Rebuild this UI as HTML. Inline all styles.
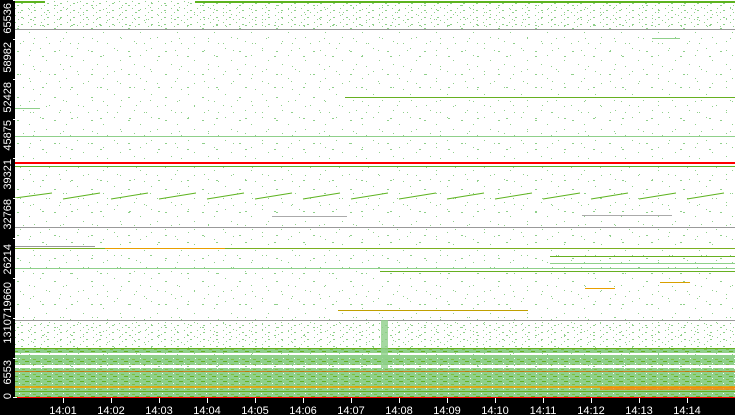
<!DOCTYPE html>
<html><head><meta charset="utf-8"><style>
html,body{margin:0;padding:0;background:#fff;width:735px;height:415px;overflow:hidden}
svg{display:block}
text{font-family:"Liberation Sans",sans-serif;font-size:11px;fill:#fff}
</style></head><body>
<svg width="735" height="415" viewBox="0 0 735 415" xmlns="http://www.w3.org/2000/svg" shape-rendering="crispEdges">
<defs>
<pattern id="n1" width="37" height="23" patternUnits="userSpaceOnUse">
<rect x="3" y="2" width="1" height="1" fill="#8fd08a"/><rect x="17" y="5" width="2" height="1" fill="#8fd08a"/>
<rect x="29" y="9" width="1" height="1" fill="#8fd08a"/><rect x="9" y="14" width="1" height="1" fill="#8fd08a"/>
<rect x="23" y="18" width="1" height="1" fill="#8fd08a"/><rect x="33" y="20" width="1" height="1" fill="#8fd08a"/>
</pattern>
<pattern id="n2" width="29" height="31" patternUnits="userSpaceOnUse">
<rect x="5" y="7" width="1" height="1" fill="#8fd08a"/><rect x="20" y="12" width="1" height="1" fill="#8fd08a"/>
<rect x="13" y="25" width="2" height="1" fill="#8fd08a"/><rect x="1" y="19" width="1" height="1" fill="#8fd08a"/>
</pattern>
<pattern id="n3" width="13" height="7" patternUnits="userSpaceOnUse">
<rect x="2" y="1" width="1" height="1" fill="#8fd08a"/><rect x="8" y="3" width="2" height="1" fill="#8fd08a"/>
<rect x="5" y="5" width="1" height="1" fill="#8fd08a"/>
</pattern>
<pattern id="d1" width="11" height="5" patternUnits="userSpaceOnUse">
<rect width="11" height="5" fill="#8fd08a"/><rect x="3" y="1" width="4" height="1" fill="#66b020"/>
<rect x="8" y="3" width="1" height="1" fill="#fff"/><rect x="0" y="4" width="3" height="1" fill="#7cc040"/>
</pattern>
</defs>
<rect x="15" y="0" width="720" height="398" fill="url(#n1)"/>
<rect x="15" y="0" width="720" height="398" fill="url(#n2)"/>
<rect x="15" y="0" width="720" height="30" fill="url(#n3)"/>
<rect x="15" y="320" width="720" height="30" fill="url(#n3)"/>
<rect x="381" y="320" width="354" height="30" fill="url(#n2)"/>
<rect x="381" y="320" width="354" height="30" fill="url(#n3)"/>
<g>
<rect x="15" y="1" width="30" height="2" fill="#5db31f"/><rect x="195" y="1" width="540" height="2" fill="#5db31f"/>
<rect x="15" y="29" width="720" height="1" fill="#999"/>
<rect x="652" y="38" width="28" height="1" fill="#8fd08a"/>
<rect x="345" y="97" width="390" height="1" fill="#66b020"/>
<rect x="15" y="108" width="25" height="1" fill="#8fd08a"/>
<rect x="15" y="136" width="720" height="1" fill="#8fd08a"/>
<rect x="15" y="162" width="720" height="2" fill="#f00"/>
<rect x="15" y="166" width="720" height="1" fill="#5db31f"/>
<g stroke="#5db31f" stroke-width="1" shape-rendering="auto">
<line x1="15" y1="198" x2="52" y2="193"/><line x1="63" y1="199" x2="100" y2="193"/>
<line x1="111" y1="199" x2="148" y2="193"/><line x1="159" y1="199" x2="196" y2="193"/>
<line x1="207" y1="199" x2="244" y2="193"/><line x1="255" y1="199" x2="292" y2="193"/>
<line x1="303" y1="199" x2="340" y2="193"/><line x1="351" y1="199" x2="388" y2="193"/>
<line x1="399" y1="199" x2="436" y2="193"/><line x1="447" y1="199" x2="484" y2="193"/>
<line x1="495" y1="199" x2="532" y2="193"/><line x1="543" y1="199" x2="580" y2="193"/>
<line x1="591" y1="199" x2="628" y2="193"/><line x1="639" y1="199" x2="676" y2="193"/>
<line x1="687" y1="199" x2="724" y2="193"/>
</g>
<rect x="272" y="216" width="75" height="1" fill="#aaa"/><rect x="582" y="215" width="90" height="1" fill="#aaa"/>
<rect x="15" y="227" width="720" height="1" fill="#999"/>
<rect x="15" y="246" width="80" height="1" fill="#999"/>
<rect x="15" y="248" width="720" height="1" fill="#7ab020"/>
<rect x="105" y="248" width="120" height="1" fill="#e8a000"/>
<rect x="550" y="256" width="185" height="1" fill="#66b020"/>
<rect x="550" y="263" width="185" height="1" fill="#8fd08a"/>
<rect x="15" y="268" width="720" height="1" fill="#8fd08a"/>
<rect x="380" y="271" width="355" height="1" fill="#66b020"/>
<rect x="585" y="288" width="30" height="1" fill="#e8a000"/><rect x="660" y="282" width="30" height="1" fill="#d8a000"/>
<rect x="338" y="310" width="190" height="1" fill="#c0a000"/>
<rect x="15" y="320" width="720" height="1" fill="#999"/>
</g>
<rect x="15" y="348" width="720" height="5" fill="url(#d1)"/>
<rect x="15" y="348" width="720" height="1" fill="#66b020"/>
<rect x="15" y="355" width="720" height="3" fill="#8fd08a"/>
<rect x="15" y="358" width="720" height="7" fill="url(#d1)"/>
<rect x="15" y="368" width="720" height="29" fill="url(#d1)"/>
<rect x="15" y="371" width="720" height="1" fill="#e06000" opacity=".7"/>
<rect x="15" y="386" width="720" height="2" fill="#f0a000" opacity=".8"/>
<rect x="15" y="391" width="720" height="1" fill="#66b020"/>
<rect x="600" y="387" width="135" height="3" fill="#ff8000" opacity=".7"/>
<rect x="381" y="320" width="7" height="48" fill="#8fd08a" opacity=".8"/>
<rect x="15" y="397" width="720" height="1" fill="#f00"/>
<rect x="0" y="0" width="15" height="415" fill="#000"/>
<rect x="0" y="398" width="735" height="17" fill="#000"/>
<g fill="#fff">
<rect x="13" y="0" width="4" height="1"/><rect x="13" y="39" width="4" height="1"/><rect x="13" y="79" width="4" height="1"/>
<rect x="13" y="119" width="4" height="1"/><rect x="13" y="158" width="4" height="1"/><rect x="13" y="198" width="4" height="1"/>
<rect x="13" y="238" width="4" height="1"/><rect x="13" y="278" width="4" height="1"/><rect x="13" y="318" width="4" height="1"/>
<rect x="13" y="358" width="4" height="1"/><rect x="13" y="397" width="4" height="1"/>
</g>
<g text-anchor="end" style="font-size:10px">
<text transform="translate(11,3) rotate(-90)">65536</text>
<text transform="translate(11,42) rotate(-90)">58982</text>
<text transform="translate(11,82) rotate(-90)">52428</text>
<text transform="translate(11,120) rotate(-90)">45875</text>
<text transform="translate(11,159) rotate(-90)">39321</text>
<text transform="translate(11,199) rotate(-90)">32768</text>
<text transform="translate(11,244) rotate(-90)">26214</text>
<text transform="translate(11,282) rotate(-90)">19660</text>
<text transform="translate(11,313) rotate(-90)">13107</text>
<text transform="translate(11,360) rotate(-90)">6553</text>
<text transform="translate(11,393) rotate(-90)">0</text>
</g>
<g fill="#fff">
<rect x="63" y="398" width="1" height="5"/><rect x="111" y="398" width="1" height="5"/><rect x="159" y="398" width="1" height="5"/>
<rect x="207" y="398" width="1" height="5"/><rect x="255" y="398" width="1" height="5"/><rect x="303" y="398" width="1" height="5"/>
<rect x="351" y="398" width="1" height="5"/><rect x="399" y="398" width="1" height="5"/><rect x="447" y="398" width="1" height="5"/>
<rect x="495" y="398" width="1" height="5"/><rect x="543" y="398" width="1" height="5"/><rect x="591" y="398" width="1" height="5"/>
<rect x="639" y="398" width="1" height="5"/><rect x="687" y="398" width="1" height="5"/>
</g>
<g text-anchor="middle">
<text x="63" y="414">14:01</text><text x="111" y="414">14:02</text><text x="159" y="414">14:03</text>
<text x="207" y="414">14:04</text><text x="255" y="414">14:05</text><text x="303" y="414">14:06</text>
<text x="351" y="414">14:07</text><text x="399" y="414">14:08</text><text x="447" y="414">14:09</text>
<text x="495" y="414">14:10</text><text x="543" y="414">14:11</text><text x="591" y="414">14:12</text>
<text x="639" y="414">14:13</text><text x="687" y="414">14:14</text>
</g>
</svg>
</body></html>
